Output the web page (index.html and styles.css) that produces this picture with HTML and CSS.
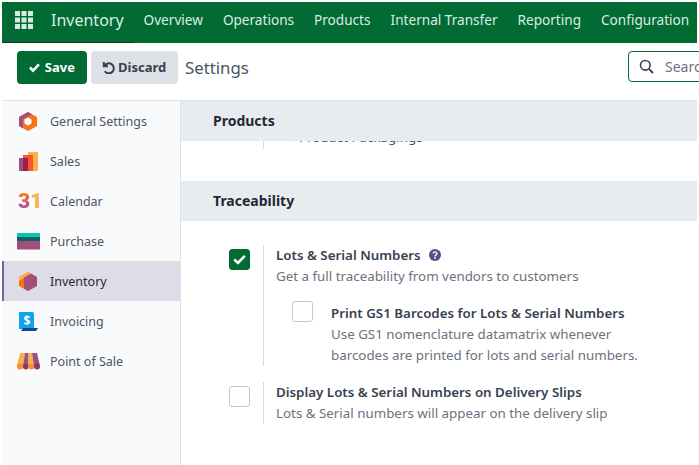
FILE: index.html
```html
<!DOCTYPE html>
<html lang="en">
<head>
<meta charset="utf-8">
<title>Inventory Settings</title>
<link rel="stylesheet" href="styles.css">
</head>
<body>
<div class="app">
  <nav class="navbar">
    <svg class="apps" width="18" height="18" viewBox="0 0 18 18"><g fill="#d9ebe0"><rect width="5" height="5"/><rect x="6.500" width="5" height="5"/><rect x="13" width="5" height="5"/><rect y="6.500" width="5" height="5"/><rect x="6.500" y="6.500" width="5" height="5"/><rect x="13" y="6.500" width="5" height="5"/><rect y="13" width="5" height="5"/><rect x="6.500" y="13" width="5" height="5"/><rect x="13" y="13" width="5" height="5"/></g></svg>
    <span class="brand">Inventory</span>
    <span class="item">Overview</span>
    <span class="item">Operations</span>
    <span class="item">Products</span>
    <span class="item">Internal Transfer</span>
    <span class="item">Reporting</span>
    <span class="item">Configuration</span>
  </nav>
  <header class="control">
    <button class="btn primary"><svg width="12" height="11" viewBox="0 0 12 11"><path d="M1 5.500 4.500 9 11 2" fill="none" stroke="#fff" stroke-width="2.800"/></svg>Save</button>
    <button class="btn secondary"><svg width="13" height="13" viewBox="0 0 13 13"><path d="M1.800 1v4.200H6M2.400 5a5 5 0 1 1 .3 5.200" fill="none" stroke="#374151" stroke-width="2"/></svg>Discard</button>
    <span class="crumb">Settings</span>
    <div class="search"><svg width="15" height="15" viewBox="0 0 15 15"><circle cx="6.300" cy="6.300" r="4.800" fill="none" stroke="#374151" stroke-width="1.600"/><path d="m10 10 4 4" stroke="#374151" stroke-width="1.800"/></svg><span>Search...</span></div>
  </header>
  <div class="main">
    <aside class="sidebar">
      <div class="tab"><svg class="ico" width="24" height="24" viewBox="0 0 24 24"><path d="M11 3 20 8v9l-9 5-9-5V8z" fill="#f97316"/><path d="M11 3 2 8v9l4 2.300V10l9-4.800z" fill="#a04f7c"/><path d="M11 8.500 14.500 10.500v4L11 16.500l-3.500-2v-4z" fill="#fff"/></svg><span>General Settings</span></div>
      <div class="tab"><svg class="ico" width="24" height="24" viewBox="0 0 24 24"><rect x="11" y="3" width="10" height="19" fill="#fbb04c"/><rect x="6" y="6" width="10" height="16" fill="#f4572e"/><rect x="2" y="9" width="9" height="13" fill="#a04f7c"/><rect x="6" y="9" width="5" height="13" fill="#9c1f45"/></svg><span>Sales</span></div>
      <div class="tab"><span class="ico cal"><b class="c3">3</b><b class="c1">1</b></span><span>Calendar</span></div>
      <div class="tab"><svg class="ico" width="24" height="24" viewBox="0 0 24 24"><rect y="4" width="23" height="4" fill="#12c2ac"/><rect y="8" width="23" height="4" fill="#125d6b"/><rect y="12" width="23" height="8.500" fill="#a04f7c"/></svg><span>Purchase</span></div>
      <div class="tab active"><svg class="ico" width="24" height="24" viewBox="0 0 24 24"><path d="M11 3 2 8v9l5 2.800V8.500l7-4z" fill="#f97316"/><path d="M11 3 2 8v4l5-3.500 7-4z" fill="#fbb04c"/><path d="M14 4.500 20 8v9l-9 5-4-2.200V8.500z" fill="#a04f7c"/></svg><span>Inventory</span></div>
      <div class="tab"><svg class="ico" width="24" height="24" viewBox="0 0 24 24"><path d="M2 3h14l1 2v15H2z" fill="#0ea5e9"/><path d="M6 19h15l-2 3H4z" fill="#114a8c"/><text x="6.500" y="15.500" class="dollar">$</text></svg><span>Invoicing</span></div>
      <div class="tab"><svg class="ico" width="24" height="24" viewBox="0 0 24 24"><path d="M3 4h5L6 17H0z" fill="#fbb04c"/><path d="M8 4h3.500V17H6z" fill="#a04f7c"/><path d="M11.500 4H15l2 13h-5.500z" fill="#fbb04c"/><path d="M15 4h5l3 13h-6z" fill="#a04f7c"/><circle cx="3" cy="17.500" r="3" fill="#f4922e"/><circle cx="8.800" cy="17.500" r="2.900" fill="#8a3a66"/><circle cx="14.300" cy="17.500" r="2.900" fill="#f4922e"/><circle cx="20" cy="17.500" r="3" fill="#8a3a66"/></svg><span>Point of Sale</span></div>
    </aside>
    <section class="content">
      <h2 class="band">Products</h2>
      <div class="scrolled">
        <div class="clipped"><div class="clip-row"><span class="arrow">&#8594;</span><span>Product Packagings</span></div></div>
      </div>
      <h2 class="band">Traceability</h2>
      <div class="settings">
        <div class="setting">
          <div class="box checked"><svg width="13" height="11" viewBox="0 0 13 11"><path d="M1.300 5.500 5 9 11.800 1.800" fill="none" stroke="#fff" stroke-width="2.600"/></svg></div>
          <div class="body">
            <div class="title">Lots &amp; Serial Numbers <svg class="help" width="12" height="12" viewBox="0 0 12 12"><circle cx="6" cy="6" r="6" fill="#5b4b8a"/><path d="M4.200 4.600a1.800 1.700 0 1 1 2.600 1.500c-.6.400-.8.600-.8 1.300" fill="none" stroke="#fff" stroke-width="1.400"/><rect x="5.200" y="8.300" width="1.600" height="1.500" fill="#fff"/></svg></div>
            <div class="desc">Get a full traceability from vendors to customers</div>
            <div class="sub">
              <div class="box"></div>
              <div class="subbody">
                <div class="title">Print GS1 Barcodes for Lots &amp; Serial Numbers</div>
                <div class="desc">Use GS1 nomenclature datamatrix whenever<br>barcodes are printed for lots and serial numbers.</div>
              </div>
            </div>
          </div>
        </div>
        <div class="setting second">
          <div class="box"></div>
          <div class="body">
            <div class="title">Display Lots &amp; Serial Numbers on Delivery Slips</div>
            <div class="desc">Lots &amp; Serial numbers will appear on the delivery slip</div>
          </div>
        </div>
      </div>
    </section>
  </div>
</div>
</body>
</html>
```
FILE: styles.css
```css
* { box-sizing: border-box; }
html, body { margin: 0; height: 100%; background: #fff; overflow: hidden; }
body { font-family: "Noto Sans", sans-serif; font-size: 13px; color: #374151; }
.app { width: 699px; height: 465px; padding: 2px 2px 0; display: flex; flex-direction: column; overflow: hidden; }
.navbar { height: 41px; flex: none; background: #016b33; display: flex; align-items: center; padding: 0 0 6px 13px; color: #dcece3; white-space: nowrap; position: relative; font-size: 13.6px; }
.navbar::after { content: ""; position: absolute; left: 0; bottom: 0; width: 132px; height: 1px; background: #0a3d22; }
.apps { flex: none; margin-right: 18px; }
.brand { font-size: 16px; margin-right: 20px; }
.item { margin-right: 20px; }
.control { height: 57px; flex: none; display: flex; align-items: center; padding: 0 0 8px 15px; white-space: nowrap; }
.btn { height: 33px; border: 0; border-radius: 4px; display: flex; align-items: center; font: 700 13px "Noto Sans", sans-serif; padding-bottom: 2px; }
.primary { background: #016b33; color: #fff; width: 70px; padding-left: 12px; padding-right: 12px; gap: 5px; }
.secondary { background: #dee2e6; color: #374151; width: 87px; margin-left: 4px; padding-left: 11px; padding-right: 11px; gap: 3px; }
.crumb { font-size: 16.800px; margin-left: 7px; color: #4b5563; }
.search { margin: 0 -100px 2px auto; width: 169px; height: 31px; border: 1px solid #016b33; border-radius: 4px; display: flex; align-items: center; gap: 11px; padding-left: 10px; color: #6b7280; font-size: 14px; flex: none; }
.main { flex: 1; display: flex; min-height: 0; border-top: 1px solid #dee2e6; }
.sidebar { width: 179px; flex: none; background: #f9fafb; border-right: 1px solid #dee2e6; }
.tab { height: 40px; display: flex; align-items: center; padding-left: 15px; gap: 9px; color: #4b5563; font-size: 12.500px; }
.tab.active { background: #dedce7; color: #1f2937; border-left: 2px solid #71639e; padding-left: 13px; }
.ico { width: 24px; height: 24px; flex: none; }
.cal { display: flex; align-items: center; font: 700 21px/24px Roboto, sans-serif; padding-left: 1px; }
.c3 { background: linear-gradient(#f97316 25%, #b5508a 70%); -webkit-background-clip: text; background-clip: text; color: transparent; }
.c1 { color: #fbb04c; }
.dollar { font: 700 12px "Noto Sans", sans-serif; fill: #fff; }
.content { flex: 1; min-width: 0; }
.band { margin: 0; height: 40px; background: #e9ecef; display: flex; align-items: center; padding: 0 0 2px 32px; font-size: 14px; font-weight: 700; color: #1f2937; }
.scrolled { height: 40px; padding-left: 82px; overflow: hidden; }
.clipped { height: 8px; border-left: 1px solid #d8dadd; padding-left: 21px; color: #4b5563; font-size: 13.350px; display: flow-root; }
.clip-row { display: flex; margin-top: -13px; white-space: nowrap; }
.arrow { width: 14px; flex: none; }
.settings { padding: 24px 0 0 48px; font-size: 13.350px; }
.setting { display: flex; }
.setting.second { margin-top: 16px; }
.box { width: 21px; height: 21px; flex: none; border: 1px solid #c4c8cc; border-radius: 3px; margin-top: 4px; display: flex; align-items: center; justify-content: center; background: #fff; }
.box.checked { background: #016b33; border-color: #016b33; }
.body { margin-left: 13px; border-left: 1px solid #d8dadd; padding-left: 12px; }
.title { font-weight: 600; color: #374151; line-height: 21px; white-space: nowrap; }
.help { margin-left: 5px; vertical-align: -1px; }
.desc { color: #6b7280; line-height: 21px; white-space: nowrap; }
.sub { display: flex; margin-top: 16px; padding-left: 16px; }
.sub .box { margin-top: -2px; }
.subbody { margin-left: 18px; }
```
